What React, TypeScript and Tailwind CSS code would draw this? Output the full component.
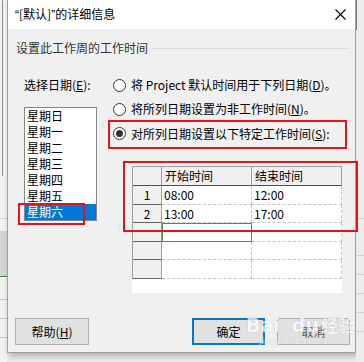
const font = "font-['Noto_Sans_CJK_SC',sans-serif]";
const latin = "font-['Liberation_Sans',sans-serif]";

const days = ["星期日", "星期一", "星期二", "星期三", "星期四", "星期五", "星期六"];

const rows = [
  { n: "1", start: "08:00", end: "12:00", h: "h-[19px]" },
  { n: "2", start: "13:00", end: "17:00", h: "h-[18px]" },
  { n: "", start: "", end: "", h: "h-[19px]", active: true },
  { n: "", start: "", end: "", h: "h-[18px]" },
  { n: "", start: "", end: "", h: "h-[19px]" },
];

function Radio({ checked }: { checked?: boolean }) {
  return (
    <span className="flex h-[13px] w-[13px] shrink-0 items-center justify-center rounded-full border border-[#333] bg-white">
      {checked && <span className="h-[7px] w-[7px] rounded-full bg-[#333]" />}
    </span>
  );
}

export default function App() {
  return (
    <div className={`relative flex h-[362px] w-[364px] overflow-hidden bg-[#ebebeb] text-[12px] text-black ${font}`}>
      {/* underlying app, left */}
      <div className="flex w-[7px] shrink-0 flex-col bg-[#f2f2f2]">
        <div className="ml-[2px] h-[176px] w-px bg-[#8c8c8c]" />
        <div className="mt-[42px] h-px bg-[#d0d0d0]" />
        <div className="mt-[12px] h-[45px] bg-[#d4d4d4]" />
        <div className="h-px bg-[#3c8a3c]" />
        <div className="mt-[22px] h-px bg-[#c8c8c8]" />
        <div className="mt-[18px] h-px bg-[#c8c8c8]" />
        <div className="mt-[18px] h-px bg-[#c8c8c8]" />
      </div>

      {/* dialog */}
      <div className="flex h-[353px] w-[349px] shrink-0 flex-col border-x border-b border-[#a0a0a0] shadow-[2px_3px_6px_rgba(0,0,0,0.25)]">
        {/* title bar */}
        <div className="flex h-[29px] items-center justify-between bg-white pl-[7px] pr-[9px] leading-[16px]">
          <span>
            <span className={latin}>“</span>[默认]<span className={latin}>”</span>的详细信息
          </span>
          <svg width="11" height="11" viewBox="0 0 11 11" className="text-black">
            <path d="M0.5 0.5L10.5 10.5M10.5 0.5L0.5 10.5" stroke="currentColor" strokeWidth="1.1" />
          </svg>
        </div>

        {/* body */}
        <div className="flex flex-1 flex-col bg-[#f0f0f0]">
          <div className="mt-[11px] flex h-[16px] items-center pl-[8px] pr-[5px] leading-[16px]">
            <span className="text-[#333]">设置此工作周的工作时间</span>
            <span className="ml-[4px] h-px flex-1 bg-[#dcdcdc]" />
          </div>

          <div className="mt-[17px] flex">
            {/* left: days */}
            <div className="flex w-[89px] shrink-0 flex-col pl-[16px]">
              <div className="h-[24px] leading-[24px]">
                选择日期(<span className="underline">E</span>):
              </div>
              <div className="mt-[10px] flex h-[114px] w-[73px] flex-col border border-[#828790] bg-white">
                {days.map((d, i) => (
                  <div
                    key={d}
                    className={
                      i === 6
                        ? "h-[16px] bg-[#0078d7] pl-[2px] leading-[16px] text-white"
                        : "h-[16px] pl-[2px] leading-[16px]"
                    }
                  >
                    {d}
                  </div>
                ))}
              </div>
            </div>

            {/* right: options + table */}
            <div className="ml-[16px] flex flex-col">
              <div className="flex h-[24px] items-center gap-[5px] leading-[16px]">
                <Radio />
                <span>
                  将 Project 默认时间用于下列日期(<span className="underline">D</span>)。
                </span>
              </div>
              <div className="flex h-[24px] items-center gap-[5px] leading-[16px]">
                <Radio />
                <span>
                  将所列日期设置为非工作时间(<span className="underline">N</span>)。
                </span>
              </div>
              <div className="flex h-[25px] items-center gap-[5px] leading-[16px]">
                <Radio checked />
                <span>
                  对所列日期设置以下特定工作时间(<span className="underline">S</span>):
                </span>
              </div>

              <div className="ml-[19px] mt-[20px] h-[127px] w-[210px] bg-white">
                <div className="grid grid-cols-[29px_90px_90px] border-l border-t border-[#a0a0a0]">
                  <div className="h-[19px] border-b border-r border-b-[#505050] border-r-[#a0a0a0] bg-[#f0f0f0]" />
                  <div className="h-[19px] border-b border-r border-b-[#505050] border-r-[#a0a0a0] bg-[#f0f0f0] pl-[3px] leading-[18px]">
                    开始时间
                  </div>
                  <div className="h-[19px] border-b border-r border-b-[#505050] border-r-[#a0a0a0] bg-[#f0f0f0] pl-[3px] leading-[18px]">
                    结束时间
                  </div>
                  {rows.map((r, i) => (
                    <div key={i} className="contents">
                      <div className={`${r.h} border-b border-r border-b-[#646464] border-r-[#a0a0a0] bg-[#f0f0f0] text-center leading-[18px]`}>
                        {r.n}
                      </div>
                      <div
                        className={
                          r.active
                            ? `${r.h} border border-[#4e8f4e] pl-[2px] leading-[18px]`
                            : `${r.h} border-b border-r border-dashed border-[#c4c4c4] pl-[2px] leading-[18px]`
                        }
                      >
                        {r.start}
                      </div>
                      <div className={`${r.h} border-b border-r border-dashed border-[#c4c4c4] pl-[2px] leading-[18px]`}>
                        {r.end}
                      </div>
                    </div>
                  ))}
                </div>
              </div>
            </div>
          </div>

          {/* buttons */}
          <div className="mt-auto flex items-center pb-[7px] pl-[7px] pr-[5px]">
            <button className="h-[27px] w-[74px] border border-[#adadad] bg-[#e1e1e1] leading-[16px]">
              帮助(<span className="underline">H</span>)
            </button>
            <button className="ml-auto h-[27px] w-[73px] border-2 border-[#0078d7] bg-[#e1e1e1] leading-[16px]">
              确定
            </button>
            <button className="ml-[12px] h-[27px] w-[73px] border border-[#adadad] bg-[#e1e1e1] leading-[16px] text-[#555]">
              取消
            </button>
          </div>
        </div>
      </div>

      {/* underlying app, right */}
      <div className="flex flex-1 flex-col bg-[#ececec]">
        <div className="h-[30px] w-px bg-[#7a7a7a]" />
        <div className="mt-[188px] h-px bg-[#cfcfcf]" />
        <div className="mt-[36px] h-px bg-[#cfcfcf]" />
        <div className="mt-[18px] h-px bg-[#cfcfcf]" />
        <div className="mt-[18px] h-px bg-[#cfcfcf]" />
        <div className="mt-[18px] h-px bg-[#cfcfcf]" />
        <div className="mt-[18px] h-px bg-[#cfcfcf]" />
      </div>

      {/* red annotation boxes */}
      <div className="absolute left-[108px] top-[120px] h-[29px] w-[239px] border-2 border-[#e5121c]" />
      <div className="absolute left-[18px] top-[203px] h-[22px] w-[67px] border-2 border-[#e5121c]" />
      <div className="absolute left-[123px] top-[161px] h-[71px] w-[235px] border-2 border-[#e5121c]" />

      {/* watermark */}
      <div className="pointer-events-none absolute left-[246px] top-[314px] flex flex-col items-center font-['DejaVu_Sans',sans-serif] text-white opacity-70 [text-shadow:0_0_1px_#9a9a9a]">
        <div className="text-[19px] font-bold leading-[22px]">
          Bai<span className="ml-[12px]">du</span>
          <span className={`ml-[2px] text-[17px] ${font}`}>经验</span>
        </div>
        <div className="text-[9px] leading-[10px]">jingyan.baidu.com</div>
      </div>
    </div>
  );
}
